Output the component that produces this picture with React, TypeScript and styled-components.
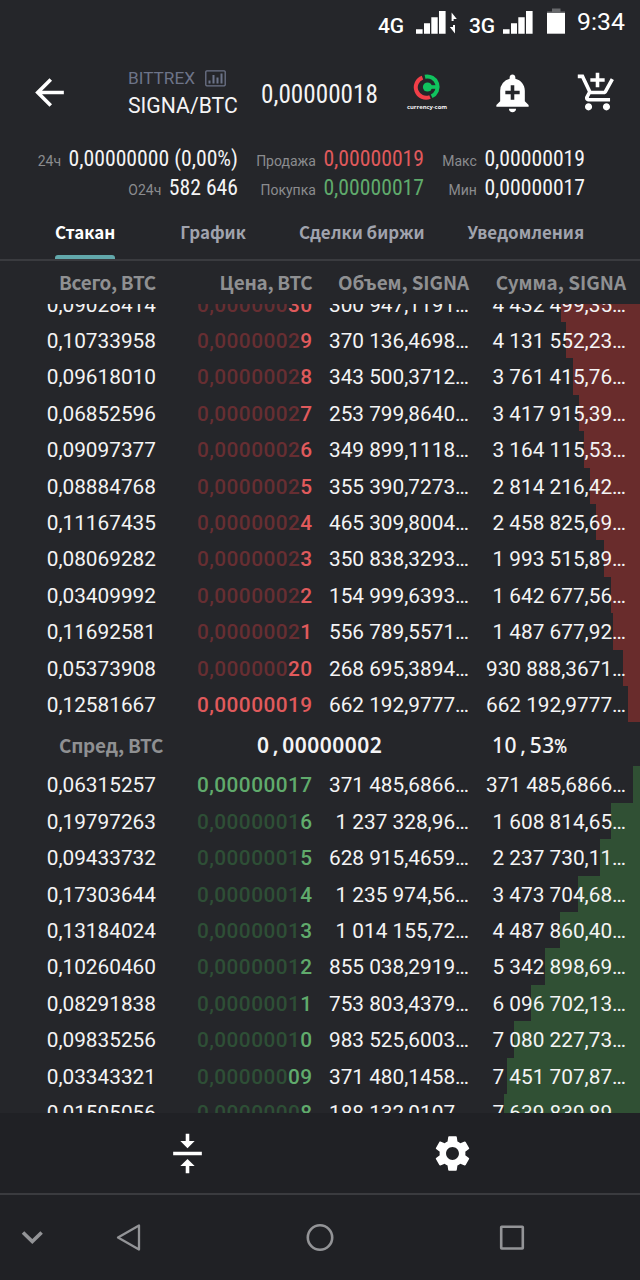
import React from 'react';
import styled, { createGlobalStyle } from 'styled-components';
import { MdAddAlert, MdAddShoppingCart, MdArrowBack, MdSettings, MdVerticalAlignCenter } from 'react-icons/md';

type Side = 'sell' | 'buy';

const palette = {
  bg: '#25262a',
  bar: '#202125',
  text: '#f4f4f5',
  muted: '#8b8c8f',
  line: '#3a3b3f',
  nav: '#939497',
  sell: { bright: '#e05a5c', dim: '#672e32', depth: '#692c2c' },
  buy: { bright: '#60ab6c', dim: '#2e4f36', depth: '#305034' },
};

const GlobalStyle = createGlobalStyle`
  * { box-sizing: border-box; }
  body { margin: 0; background: ${palette.bg}; }
`;

const Screen = styled.div`
  display: flex;
  flex-direction: column;
  width: 640px;
  height: 1280px;
  overflow: hidden;
  background: ${palette.bg};
  color: ${palette.text};
  font-family: Roboto, sans-serif;
  white-space: nowrap;
`;

/* Status bar */
const StatusBar = styled.div`
  display: flex;
  align-items: flex-start;
  height: 50px;
  padding-left: 378px;
  color: #fff;
`;
const Network = styled.span<{ $width: number }>`
  width: ${(p) => p.$width}px;
  padding-top: 14px;
  font-size: 21px;
  font-weight: 500;
  line-height: 25px;
  letter-spacing: -0.3px;
`;
const SignalIcon = styled.svg<{ $gap: number }>`
  display: block;
  flex: none;
  margin: 8px ${(p) => p.$gap}px 0 0;
`;
const Clock = styled.span`
  padding-top: 8px;
  font-size: 24.8px;
  line-height: 28px;
`;

/* App bar */
const AppBar = styled.header`
  display: flex;
  align-items: center;
  height: 84px;
  padding-left: 28px;
`;
const IconButton = styled.button<{ $right?: number }>`
  display: flex;
  padding: 0;
  margin: 0 ${(p) => p.$right ?? 0}px 0 0;
  border: 0;
  background: none;
  color: #fff;
  font-size: 43px;
`;
const Pair = styled.div`
  width: 133px;
  padding-top: 2px;
`;
const Exchange = styled.div`
  display: flex;
  align-items: center;
  gap: 10px;
  height: 25px;
  color: #6d7489;
  font-size: 17.2px;
  line-height: 25px;
`;
const ChartIcon = styled.svg`
  display: block;
  margin-top: -1px;
`;
const Symbol = styled.div`
  height: 29px;
  font-size: 21.2px;
  line-height: 29px;
`;
const LastPrice = styled.div`
  width: 146px;
  padding-top: 5px;
  font: 400 25.2px/30px 'Roboto Condensed', Roboto, sans-serif;
`;
const Brand = styled.div`
  display: flex;
  flex-direction: column;
  align-items: center;
  gap: 2px;
  width: 40px;
  margin-right: 44px;
  font: 700 5.9px/9px 'Open Sans', sans-serif;
`;

/* 24h statistics */
const Stats = styled.section`
  display: grid;
  grid-template-columns: 238px 186px 161px;
  grid-auto-rows: 29.3px;
  height: 70px;
  padding-top: 10px;
`;
const Stat = styled.div`
  display: flex;
  align-items: baseline;
  justify-content: flex-end;
  gap: 7.5px;
  line-height: 29px;
`;
const StatLabel = styled.span`
  color: ${palette.muted};
  font-size: 14px;
`;
const StatValue = styled.span<{ $side?: Side }>`
  color: ${(p) => (p.$side ? palette[p.$side].bright : palette.text)};
  font-family: 'Roboto Condensed', Roboto, sans-serif;
  font-size: 21.7px;
`;

/* Tabs */
const Tabs = styled.nav`
  display: flex;
  height: 57px;
  padding-left: 55px;
  border-bottom: 2px solid ${palette.line};
`;
const Tab = styled.div<{ $gap: number; $active?: boolean }>`
  position: relative;
  height: 55px;
  margin-right: ${(p) => p.$gap}px;
  color: ${(p) => (p.$active ? '#fff' : '#a0a3ad')};
  font: 700 16.9px/56px 'Noto Sans CJK SC', sans-serif;

  &::after {
    content: '';
    display: ${(p) => (p.$active ? 'block' : 'none')};
    position: absolute;
    left: 0;
    right: 0;
    bottom: 0;
    height: 4px;
    border-radius: 3px 3px 0 0;
    background: #62a8ab;
  }
`;

/* Order book */
const columns = '156px 156.5px 156.5px 157px 14px';

const BookHead = styled.div`
  display: grid;
  grid-template-columns: ${columns};
  height: 43px;
  color: #8f9092;
  font: 700 18.9px/42px 'Noto Sans CJK SC', sans-serif;
  text-align: right;
`;
const HeadCell = styled.span<{ $tracking?: number }>`
  letter-spacing: ${(p) => p.$tracking ?? 0}px;
`;
const Book = styled.main`
  flex: none;
  display: flex;
  flex-direction: column;
  height: 809px;
  overflow: hidden;
`;
const Order = styled.div<{ $side: Side; $depth: number }>`
  display: grid;
  grid-template-columns: ${columns};
  flex: none;
  height: 36px;
  font-size: 20.8px;
  line-height: 38px;
  text-align: right;
  background: linear-gradient(${(p) => palette[p.$side].depth} 0 0) right / ${(p) => p.$depth}px 100% no-repeat;
`;
const Asks = styled.div`
  display: flex;
  flex-direction: column;
  justify-content: flex-end;
  flex: none;
  height: 418px;

  ${Order}:nth-child(5n + 3), ${Order}:nth-child(5n) { height: 37px; }
`;
const Bids = styled.div`
  flex: none;

  ${Order}:nth-child(5n + 1), ${Order}:nth-child(5n + 3) { height: 37px; }
`;
const Price = styled.span<{ $side: Side }>`
  color: ${(p) => palette[p.$side].bright};
  font-weight: 500;
  letter-spacing: 0.45px;
`;
const Dim = styled.span<{ $side: Side }>`
  color: ${(p) => palette[p.$side].dim};
`;
const Spread = styled.div`
  display: flex;
  flex: none;
  height: 44px;
  padding-left: 59px;
  font: 500 21px/47px 'Noto Sans', sans-serif;
  letter-spacing: 0.5px;
`;
const SpreadLabel = styled.span`
  width: 198px;
  color: #8f9092;
  font: 700 18.9px/45px 'Noto Sans CJK SC', sans-serif;
  letter-spacing: -0.25px;
`;
const SpreadValue = styled.span`
  width: 235px;
  font-weight: 600;
`;
const Comma = styled.span`
  padding: 0 3.2px;
`;
const Percent = styled.span`
  font-family: 'Noto Sans Mono', monospace;
  font-size: 19.5px;
`;

/* Bottom bars */
const ActionBar = styled.div`
  display: flex;
  justify-content: space-between;
  align-items: center;
  flex: none;
  height: 82px;
  padding: 0 166px;
  border-bottom: 2px solid ${palette.line};
  background: ${palette.bar};
`;
const SystemNav = styled.nav`
  display: flex;
  align-items: center;
  flex: 1;
  gap: 56px;
  padding: 0 0 2px 12px;
  background: ${palette.bar};
`;
const NavIcon = styled.svg<{ $left?: number }>`
  display: block;
  width: 40px;
  height: 40px;
  margin-left: ${(p) => p.$left ?? 0}px;
  fill: none;
  stroke: ${palette.nav};
  stroke-width: 2.6;
`;

type Level = [total: string, dim: string, bright: string, volume: string, sum: string];

const asks: Level[] = [
  ['0,09028414', '0,000000', '30', '300 947,1191…', '4 432 499,35…'],
  ['0,10733958', '0,0000002', '9', '370 136,4698…', '4 131 552,23…'],
  ['0,09618010', '0,0000002', '8', '343 500,3712…', '3 761 415,76…'],
  ['0,06852596', '0,0000002', '7', '253 799,8640…', '3 417 915,39…'],
  ['0,09097377', '0,0000002', '6', '349 899,1118…', '3 164 115,53…'],
  ['0,08884768', '0,0000002', '5', '355 390,7273…', '2 814 216,42…'],
  ['0,11167435', '0,0000002', '4', '465 309,8004…', '2 458 825,69…'],
  ['0,08069282', '0,0000002', '3', '350 838,3293…', '1 993 515,89…'],
  ['0,03409992', '0,0000002', '2', '154 999,6393…', '1 642 677,56…'],
  ['0,11692581', '0,0000002', '1', '556 789,5571…', '1 487 677,92…'],
  ['0,05373908', '0,000000', '20', '268 695,3894…', '930 888,3671…'],
  ['0,12581667', '', '0,00000019', '662 192,9777…', '662 192,9777…'],
];

const bids: Level[] = [
  ['0,06315257', '', '0,00000017', '371 485,6866…', '371 485,6866…'],
  ['0,19797263', '0,0000001', '6', '1 237 328,96…', '1 608 814,65…'],
  ['0,09433732', '0,0000001', '5', '628 915,4659…', '2 237 730,11…'],
  ['0,17303644', '0,0000001', '4', '1 235 974,56…', '3 473 704,68…'],
  ['0,13184024', '0,0000001', '3', '1 014 155,72…', '4 487 860,40…'],
  ['0,10260460', '0,0000001', '2', '855 038,2919…', '5 342 898,69…'],
  ['0,08291838', '0,0000001', '1', '753 803,4379…', '6 096 702,13…'],
  ['0,09835256', '0,0000001', '0', '983 525,6003…', '7 080 227,73…'],
  ['0,03343321', '0,000000', '09', '371 480,1458…', '7 451 707,87…'],
  ['0,01505056', '0,0000000', '8', '188 132,0107…', '7 639 839,89…'],
];

/* Cumulative volume represented by one pixel of depth */
const UNITS_PER_PIXEL = 56100;
const depthOf = (sum: string) => Math.round(parseInt(sum.split(',')[0].replace(/\s/g, ''), 10) / UNITS_PER_PIXEL);

const OrderRow = ({ level, side }: { level: Level; side: Side }) => {
  const [total, dim, bright, volume, sum] = level;
  return (
    <Order $side={side} $depth={depthOf(sum)}>
      <span>{total}</span>
      <Price $side={side}>
        {dim && <Dim $side={side}>{dim}</Dim>}
        {bright}
      </Price>
      <span>{volume}</span>
      <span>{sum}</span>
    </Order>
  );
};

const Signal = ({ gap, arrows }: { gap: number; arrows?: boolean }) => (
  <SignalIcon $gap={gap} width={arrows ? 42 : 30} height="28" fill="#fff">
    <path d="M0 21.3h6.6v4.4H0zM8 15.3h6v10.4H8zM15.3 9.3h6.4v16.4h-6.4zM23 3h6.6v22.7H23z" />
    {arrows && <path d="M35.600 4.500l5.200 6.500h-3.200v2h-2zM39 25.500l-5.200-6.500h3.200v-2h2z" />}
  </SignalIcon>
);

export default function App() {
  return (
    <Screen>
      <GlobalStyle />
      <StatusBar>
        <Network $width={38}>4G</Network>
        <Signal gap={11} arrows />
        <Network $width={34}>3G</Network>
        <Signal gap={14} />
        <SignalIcon $gap={12} width="18" height="28" fill="#fff">
          <path d="M5 .5h8.500v3h4.500v2H0v-2h5z" fill="#68696c" />
          <path d="M0 5h18v20.700H0z" />
        </SignalIcon>
        <Clock>9:34</Clock>
      </StatusBar>

      <AppBar>
        <IconButton $right={57}><MdArrowBack /></IconButton>
        <Pair>
          <Exchange>
            BITTREX
            <ChartIcon width="21" height="17" viewBox="0 0 21 17" fill="none" stroke="currentColor">
              <rect x=".8" y=".8" width="19.400" height="15" rx="1" strokeWidth="1.300" />
              <path d="M4.500 13.500v-3M8.500 13.500V5M12.500 13.500V7.500M16.500 13.500V3.500" strokeWidth="2" />
            </ChartIcon>
          </Exchange>
          <Symbol>SIGNA/BTC</Symbol>
        </Pair>
        <LastPrice>0,00000018</LastPrice>
        <Brand>
          <svg width="28" height="28" viewBox="-14 -14 28 28" fill="none" strokeWidth="4">
            <path d="M-4.500 -9.400A10.400 10.400 0 1 0 3 10" stroke="#f23f48" />
            <path d="M-2 -10.300A10.400 10.400 0 0 1 4.600 9.300" stroke="#10c35e" />
            <path d="M2 0H10" stroke="#10c35e" strokeWidth="3.600" />
            <circle cx="0.500" cy="0" r="4.600" fill="#10c35e" stroke="none" />
          </svg>
          currency·com
        </Brand>
        <IconButton $right={42}><MdAddAlert /></IconButton>
        <IconButton><MdAddShoppingCart /></IconButton>
      </AppBar>

      <Stats>
        <Stat><StatLabel>24ч</StatLabel><StatValue>0,00000000 (0,00%)</StatValue></Stat>
        <Stat><StatLabel>Продажа</StatLabel><StatValue $side="sell">0,00000019</StatValue></Stat>
        <Stat><StatLabel>Макс</StatLabel><StatValue>0,00000019</StatValue></Stat>
        <Stat><StatLabel>О24ч</StatLabel><StatValue>582 646</StatValue></Stat>
        <Stat><StatLabel>Покупка</StatLabel><StatValue $side="buy">0,00000017</StatValue></Stat>
        <Stat><StatLabel>Мин</StatLabel><StatValue>0,00000017</StatValue></Stat>
      </Stats>

      <Tabs>
        <Tab $active $gap={65}>Стакан</Tab>
        <Tab $gap={53}>График</Tab>
        <Tab $gap={43}>Сделки биржи</Tab>
        <Tab $gap={0}>Уведомления</Tab>
      </Tabs>

      <BookHead>
        <HeadCell $tracking={-0.25}>Всего, BTC</HeadCell>
        <HeadCell $tracking={-0.25}>Цена, BTC</HeadCell>
        <HeadCell $tracking={-0.1}>Объем, SIGNA</HeadCell>
        <HeadCell>Сумма, SIGNA</HeadCell>
      </BookHead>

      <Book>
        <Asks>
          {asks.map((level) => <OrderRow key={level[0]} level={level} side="sell" />)}
        </Asks>
        <Spread>
          <SpreadLabel>Спред, BTC</SpreadLabel>
          <SpreadValue>0<Comma>,</Comma>00000002</SpreadValue>
          <span>10<Comma>,</Comma>53<Percent>%</Percent></span>
        </Spread>
        <Bids>
          {bids.map((level) => <OrderRow key={level[0]} level={level} side="buy" />)}
        </Bids>
      </Book>

      <ActionBar>
        <IconButton><MdVerticalAlignCenter /></IconButton>
        <IconButton><MdSettings /></IconButton>
      </ActionBar>

      <SystemNav>
        <NavIcon><path d="M11 15.500L20.300 24.500L29.600 15.500" strokeWidth="3.600" /></NavIcon>
        <NavIcon><path d="M31 8.500V32.500L10 20.500Z" strokeLinejoin="round" strokeWidth="2.300" /></NavIcon>
        <NavIcon $left={96}><circle cx="20" cy="20.500" r="12.200" /></NavIcon>
        <NavIcon $left={96}><rect x="9.200" y="9.700" width="21.600" height="21.800" rx="0.500" /></NavIcon>
      </SystemNav>
    </Screen>
  );
}
